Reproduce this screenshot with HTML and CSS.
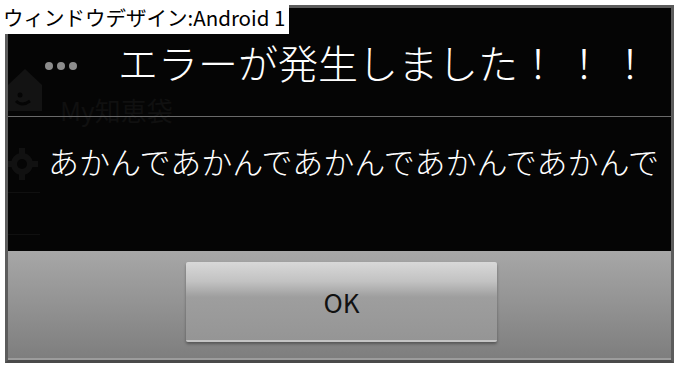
FILE: index.html
```html
<!DOCTYPE html>
<html lang="ja">
<head>
    <meta charset="UTF-8">
    <title>ウィンドウデザイン:Android 1</title>
    <link rel="stylesheet" href="styles.css">
</head>
<body>
    <div class="caption">ウィンドウデザイン:Android 1</div>

    <div class="dialog">
        <!-- app behind the dialog, dimmed -->
        <div class="ghost">
            <svg class="ghost-home" width="34" height="46" viewBox="0 0 34 46">
                <path d="M0 20 L17 4 L34 20 L34 46 L0 46 Z" fill="#131313"/>
                <circle cx="12" cy="30" r="2.5" fill="#050505"/>
                <path d="M8 36 Q14 42 22 36" stroke="#050505" stroke-width="3" fill="none"/>
            </svg>
            <div class="ghost-title">My知恵袋</div>
            <svg class="ghost-gear" width="32" height="32" viewBox="0 0 32 32">
                <circle cx="16" cy="16" r="11" fill="#111"/>
                <rect x="13" y="0" width="6" height="32" fill="#111"/>
                <rect x="0" y="13" width="32" height="6" fill="#111"/>
                <circle cx="16" cy="16" r="5" fill="#050505"/>
            </svg>
            <div class="ghost-line ghost-line1"></div>
            <div class="ghost-line ghost-line2"></div>
        </div>

        <div class="dots">
            <span></span><span></span><span></span>
        </div>

        <div class="title-row">エラーが発生しました<span class="bangs">！！！</span></div>
        <div class="divider"></div>
        <div class="message">あかんであかんであかんであかんであかんで</div>

        <div class="button-bar">
            <button class="ok-button">OK</button>
        </div>
    </div>
</body>
</html>
```

FILE: styles.css
```css
* {
    box-sizing: border-box;
    margin: 0;
    padding: 0;
}

body {
    font-family: "Noto Sans CJK JP", "Noto Sans", sans-serif;
    background: white;
    width: 680px;
    height: 368px;
    position: relative;
}

.caption {
    position: absolute;
    top: 0;
    left: 0;
    z-index: 3;
    background: white;
    color: black;
    height: 34px;
    line-height: 34px;
    padding: 0 4px 0 3px;
    font-size: 20.5px;
    white-space: nowrap;
}

.dialog {
    position: relative;
    margin: 5px 0 0 5px;
    width: 669px;
    height: 358px;
    border: 3px solid #5c5c5c;
    border-bottom-color: #4a4a4a;
    background: #050505;
    display: flex;
    flex-direction: column;
}

.ghost {
    position: absolute;
    top: 0;
    left: 0;
    right: 0;
    bottom: 0;
    overflow: hidden;
}

.ghost-home {
    position: absolute;
    left: 0;
    top: 57px;
}

.ghost-title {
    position: absolute;
    left: 52px;
    top: 89px;
    font-size: 26px;
    line-height: 26px;
    color: #101010;
}

.ghost-gear {
    position: absolute;
    left: -2px;
    top: 140px;
}

.ghost-line {
    position: absolute;
    left: 0;
    width: 32px;
    height: 1px;
    background: #101010;
}

.ghost-line1 { top: 184px; }
.ghost-line2 { top: 226px; }

.dots {
    position: absolute;
    left: 37px;
    top: 54px;
    display: flex;
    gap: 4px;
}

.dots span {
    width: 8px;
    height: 8px;
    border-radius: 50%;
    background: #8c8c8c;
}

.title-row {
    position: relative;
    height: 108px;
    padding-left: 110px;
    display: flex;
    align-items: center;
    font-size: 40px;
    font-weight: 300;
    line-height: 40px;
    color: white;
    white-space: nowrap;
}

.bangs {
    letter-spacing: 6px;
}

.divider {
    position: relative;
    height: 1px;
    background: #6a6a6a;
}

.message {
    position: relative;
    height: 134px;
    padding: 24px 0 0 40px;
    font-size: 31px;
    font-weight: 300;
    line-height: 40px;
    color: white;
    white-space: nowrap;
}

.button-bar {
    position: relative;
    flex: 1;
    background: linear-gradient(#a7a7a7, #7e7e7e);
    border-bottom: 2px solid #9c9c9c;
    display: flex;
    justify-content: center;
    padding: 11px 0 0 4px;
}

.ok-button {
    width: 311px;
    height: 80px;
    border: none;
    border-radius: 2px;
    background: linear-gradient(#d8d8d8 0%, #c2c2c2 25%, #9e9e9e 45%, #959595 100%);
    border-bottom: 2px solid #c4c4c4;
    box-shadow: 0 2px 3px rgba(0,0,0,0.35);
    font-family: "Noto Sans CJK JP", "Noto Sans", sans-serif;
    font-size: 26px;
    color: #111;
    cursor: pointer;
}
```
